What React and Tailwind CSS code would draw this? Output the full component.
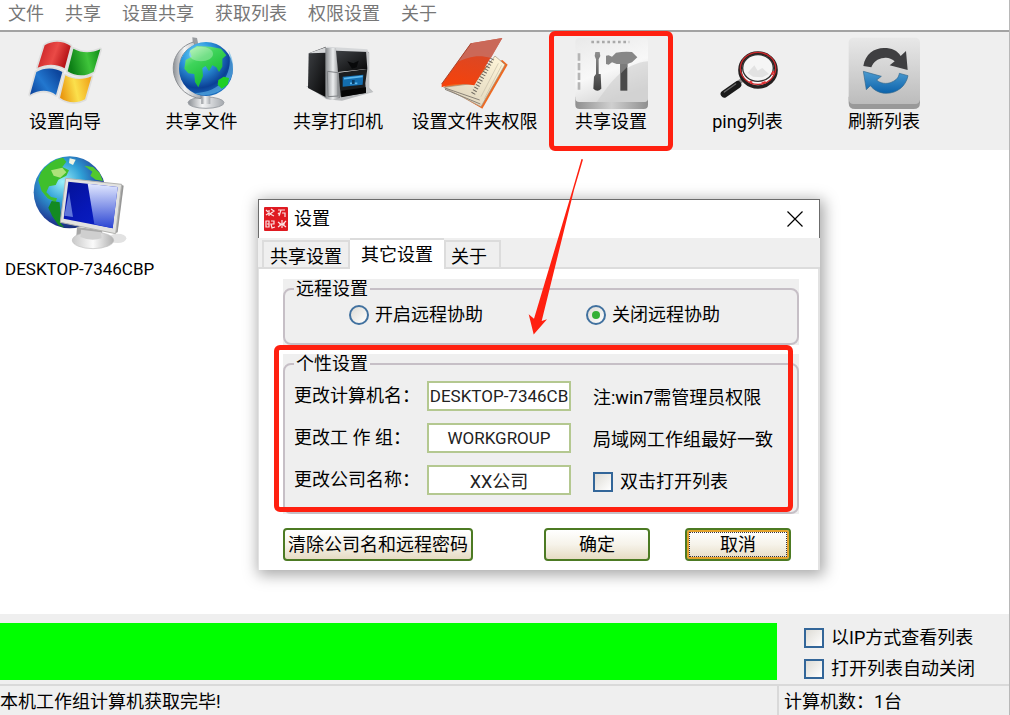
import { useState } from 'react'

const FlagIcon = () => (
  <svg viewBox="87 108 216 216" className="w-[72px] h-[72px] overflow-visible">
    <defs>
      <linearGradient id="flagRed" x1="0" x2="1" y1="0" y2="0.3">
        <stop offset="0" stopColor="#c31a1f" />
        <stop offset="0.6" stopColor="#ea4a46" />
        <stop offset="1" stopColor="#b51216" />
      </linearGradient>
      <linearGradient id="flagGreen" x1="0" x2="1" y1="0.2" y2="0">
        <stop offset="0" stopColor="#0d7f16" />
        <stop offset="0.55" stopColor="#3fc43a" />
        <stop offset="1" stopColor="#0e8a15" />
      </linearGradient>
      <linearGradient id="flagBlue" x1="0" x2="1" y1="1" y2="0.4">
        <stop offset="0" stopColor="#0b3f97" />
        <stop offset="0.5" stopColor="#2277cf" />
        <stop offset="1" stopColor="#0d469d" />
      </linearGradient>
      <linearGradient id="flagYellow" x1="0" x2="1" y1="0.6" y2="0.4">
        <stop offset="0" stopColor="#e9950e" />
        <stop offset="0.5" stopColor="#fbe04c" />
        <stop offset="1" stopColor="#f0a51a" />
      </linearGradient>
    </defs>
    <g stroke="#d4d4d4" strokeWidth="10" strokeLinejoin="round" opacity="0.6">
      <path d="M134 136C155 121 190 121 212 138L194 205C172 192 142 190 113 203ZM220 146C245 160 275 160 301 148L281 215C255 231 225 228 203 214ZM109 216C135 201 165 203 187 216L168 285C145 268 118 269 90 284ZM196 226C220 240 248 241 275 229L255 298C230 312 200 308 180 293Z" fill="#ddd" />
    </g>
    <path d="M134 136C155 121 190 121 212 138L194 205C172 192 142 190 113 203Z" fill="url(#flagRed)" />
    <path d="M220 146C245 160 275 160 301 148L281 215C255 231 225 228 203 214Z" fill="url(#flagGreen)" />
    <path d="M109 216C135 201 165 203 187 216L168 285C145 268 118 269 90 284Z" fill="url(#flagBlue)" />
    <path d="M196 226C220 240 248 241 275 229L255 298C230 312 200 308 180 293Z" fill="url(#flagYellow)" />
  </svg>
)

const GlobeIcon = () => (
  <svg viewBox="495 108 216 216" className="w-[72px] h-[72px] overflow-visible">
    <defs>
      <radialGradient id="sea" cx="0.35" cy="0.25" r="0.8">
        <stop offset="0" stopColor="#7fdcf5" />
        <stop offset="0.35" stopColor="#2f9be0" />
        <stop offset="0.75" stopColor="#0b4096" />
        <stop offset="1" stopColor="#1d74c4" />
      </radialGradient>
      <linearGradient id="land" x1="0" x2="0.6" y1="0" y2="1">
        <stop offset="0" stopColor="#b7f7b5" />
        <stop offset="0.4" stopColor="#3fd45b" />
        <stop offset="1" stopColor="#0fb52a" />
      </linearGradient>
      <linearGradient id="stand" x1="0" x2="1" y1="0" y2="0">
        <stop offset="0" stopColor="#8b8f94" />
        <stop offset="0.4" stopColor="#f4f5f6" />
        <stop offset="1" stopColor="#a5a9ae" />
      </linearGradient>
    </defs>
    <ellipse cx="615" cy="308" rx="54" ry="17" fill="url(#stand)" stroke="#9fa3a8" strokeWidth="3" />
    <rect x="601" y="284" width="27" height="28" fill="url(#stand)" />
    <path d="M574 112L588 114L592 134L576 138Z" fill="#9a9da1" />
    <path d="M578 126C530 140 508 185 520 228C532 270 565 292 600 296L600 284C560 270 536 240 536 200C536 170 552 148 582 136Z" fill="url(#stand)" stroke="#8d9094" strokeWidth="3" />
    <circle cx="615" cy="207" r="81" fill="url(#sea)" />
    <path d="M682 150C706 190 700 240 664 268C640 286 606 290 580 280C620 278 650 266 670 238C688 210 690 180 682 150Z" fill="#63b5e8" opacity="0.6" />
    <path d="M566 152L588 138L628 140L660 146L676 166L664 176L664 200L654 216L646 202L634 196L624 214L614 198L604 204L606 228L592 262L582 246L580 222L562 220L550 206L554 180L572 170Z" fill="url(#land)" />
    <path d="M652 240L668 230L684 234L680 254L662 266L650 254Z" fill="#1fcf25" />
    <ellipse cx="600" cy="162" rx="36" ry="22" fill="#fff" opacity="0.28" />
  </svg>
)

const PrinterIcon = () => (
  <svg viewBox="96 108 216 216" className="w-[72px] h-[72px] overflow-visible">
    <defs>
      <linearGradient id="metal" x1="0" x2="1" y1="0" y2="0">
        <stop offset="0" stopColor="#85888b" />
        <stop offset="0.5" stopColor="#eceeef" />
        <stop offset="1" stopColor="#77797c" />
      </linearGradient>
      <linearGradient id="coal" x1="0" x2="1" y1="0" y2="1">
        <stop offset="0" stopColor="#3e4145" />
        <stop offset="1" stopColor="#050505" />
      </linearGradient>
    </defs>
    <path d="M108 258L170 298L216 302L310 276L296 262Z" fill="#b9bbbd" />
    <path d="M116 160L168 140L168 292L114 264Z" fill="url(#coal)" />
    <path d="M116 160L172 140L292 148L296 158L200 154L170 158Z" fill="#d5d7d9" />
    <path d="M166 144L198 144L204 212L212 226L210 294L184 300L166 294Z" fill="url(#metal)" />
    <path d="M198 152L296 156L296 206L204 216Z" fill="url(#coal)" />
    <path d="M232 184L250 190L266 182L260 202L246 206Z" fill="#08090a" />
    <path d="M206 218L296 206L294 278L212 290Z" fill="#1b1d1f" />
    <path d="M288 152L298 158L298 268L306 276L288 280L286 250L292 206Z" fill="#c3c5c7" />
    <path d="M218 230L280 224L278 254L218 260Z" fill="#136eb0" />
    <path d="M222 236L278 229M240 250H262" stroke="#5db8ee" strokeWidth="5" />
    <path d="M250 240V252" stroke="#0b3f68" strokeWidth="8" />
    <path d="M172 214L204 218L204 288L174 290Z" fill="none" stroke="#7f8285" strokeWidth="3" />
    <path d="M214 272L288 262L288 278L214 292Z" fill="#050505" />
  </svg>
)

const BookIcon = () => (
  <svg viewBox="504 108 216 216" className="w-[72px] h-[72px] overflow-visible">
    <defs>
      <linearGradient id="cover" x1="0.6" x2="0.3" y1="0" y2="1">
        <stop offset="0" stopColor="#cf4a30" />
        <stop offset="1" stopColor="#f5420b" />
      </linearGradient>
      <linearGradient id="paper" x1="1" x2="0" y1="0" y2="1">
        <stop offset="0" stopColor="#fff6d9" />
        <stop offset="1" stopColor="#d9cfba" />
      </linearGradient>
    </defs>
    <path d="M512 254L634 326L710 194L694 180Z" fill="#ee6a22" />
    <path d="M518 262L630 320L702 194L672 168L610 250Z" fill="url(#paper)" stroke="#9b8e7c" strokeWidth="2" />
    <path d="M522 264L626 300M522 268L628 312" stroke="#8a8278" strokeWidth="3" />
    <path d="M664 176L606 282" stroke="#6b665e" strokeWidth="13" strokeDasharray="3 6" />
    <path d="M682 190L630 290M692 196L640 296" stroke="#c6bda6" strokeWidth="2" />
    <path d="M512 252L600 130L694 114L610 256C570 250 540 250 512 262Z" fill="url(#cover)" />
    <path d="M600 130L694 114L660 174C620 162 590 172 560 186Z" fill="#c96b5d" opacity="0.9" />
    <path d="M512 252L600 130" stroke="#a6452f" strokeWidth="3" />
  </svg>
)

const ToolsIcon = () => (
  <svg viewBox="105 108 216 216" className="w-[72px] h-[72px] overflow-visible">
    <defs>
      <linearGradient id="tile" x1="0" x2="0.4" y1="0" y2="1">
        <stop offset="0" stopColor="#e9e9e9" />
        <stop offset="0.6" stopColor="#f8f8f8" />
        <stop offset="1" stopColor="#dadada" />
      </linearGradient>
      <linearGradient id="tileEdge" x1="0" x2="1" y1="0" y2="0">
        <stop offset="0" stopColor="#8f8f8f" />
        <stop offset="0.5" stopColor="#cfcfcf" />
        <stop offset="1" stopColor="#8f8f8f" />
      </linearGradient>
      <linearGradient id="steel" x1="0" x2="0" y1="0" y2="1">
        <stop offset="0" stopColor="#8f8f8f" />
        <stop offset="1" stopColor="#3d3d3d" />
      </linearGradient>
    </defs>
    <path d="M106 290H324V314Q324 327 311 327H119Q106 327 106 314Z" fill="url(#tileEdge)" />
    <rect x="106" y="114" width="218" height="192" rx="12" fill="url(#tile)" />
    <path d="M324 184C250 190 210 250 170 306H312Q324 306 324 294Z" fill="#cccccc" opacity="0.55" />
    <path d="M154 126H268" stroke="#a9a9a9" strokeWidth="8" strokeDasharray="8 8" />
    <path d="M117 160V270" stroke="#b5b5b5" strokeWidth="8" strokeDasharray="22 7" />
    <path d="M166 156H179L181 168L176 178V222H182L184 266Q172 278 160 266L162 230L168 222V178L164 168Z" fill="url(#steel)" />
    <path d="M198 167L206 166L216 170L228 158Q252 154 276 156L292 172L276 187L262 192H230L216 187L206 194L198 192Z" fill="#878787" />
    <rect x="241" y="192" width="21" height="80" fill="#4a4a4a" />
    <path d="M241 192H262V200L241 222Z" fill="#7b7b7b" />
  </svg>
)

const MagnifierIcon = () => (
  <svg viewBox="513 108 216 216" className="w-[72px] h-[72px] overflow-visible">
    <path d="M606 238L580 258" stroke="#8b8b8b" strokeWidth="13" />
    <path d="M590 254L550 282" stroke="#1a1a1a" strokeWidth="22" strokeLinecap="round" />
    <path d="M584 252L550 276" stroke="#6a6a6a" strokeWidth="4" strokeLinecap="round" />
    <ellipse cx="651" cy="210" rx="54" ry="51" fill="#fafafa" stroke="#252020" strokeWidth="11" />
    <ellipse cx="651" cy="205" rx="53" ry="48" fill="none" stroke="#c8282b" strokeWidth="4" />
    <ellipse cx="651" cy="204" rx="46" ry="40" fill="#f5f5f5" stroke="#303030" strokeWidth="4" />
    <path d="M620 218L640 196L650 212L664 204L684 222L664 232L636 230Z" fill="#e2e2e2" />
    <path d="M626 244L634 248M662 250L674 246M692 224L698 214" stroke="#e33235" strokeWidth="6" />
  </svg>
)

const RefreshIcon = () => (
  <svg viewBox="144 108 216 216" className="w-[72px] h-[72px] overflow-visible">
    <defs>
      <linearGradient id="refreshTile" x1="0" x2="0" y1="0" y2="1">
        <stop offset="0" stopColor="#e8e8e8" />
        <stop offset="1" stopColor="#bcbcbc" />
      </linearGradient>
      <linearGradient id="refreshBlue" x1="0" x2="0" y1="0" y2="1">
        <stop offset="0" stopColor="#4c9bd0" />
        <stop offset="1" stopColor="#0b62ab" />
      </linearGradient>
    </defs>
    <path d="M146 290H360V308Q360 327 341 327H165Q146 327 146 308Z" fill="#999" />
    <rect x="146" y="113" width="214" height="199" rx="14" fill="url(#refreshTile)" />
    <path d="M190 198C196 162 222 144 252 144C276 144 292 152 302 168L318 153L323 210L269 196L284 184C274 176 264 172 252 174C232 176 220 186 214 202Z" fill="#3f3f41" />
    <path d="M190 214L244 229L230 240C240 250 260 254 276 246C290 240 296 232 298 220L324 227C318 258 292 280 258 280C236 279 222 270 211 257L199 269Z" fill="url(#refreshBlue)" stroke="#34688c" strokeWidth="2" />
  </svg>
)

const ComputerIcon = () => (
  <svg viewBox="96 30 282 282" className="w-[94px] h-[94px] overflow-visible">
    <defs>
      <radialGradient id="earth" cx="0.4" cy="0.35" r="0.7">
        <stop offset="0" stopColor="#9bf0fa" />
        <stop offset="0.4" stopColor="#2f9fd6" />
        <stop offset="0.8" stopColor="#213f98" />
        <stop offset="1" stopColor="#16276d" />
      </radialGradient>
      <linearGradient id="screen" x1="0" x2="1" y1="0" y2="1">
        <stop offset="0" stopColor="#041296" />
        <stop offset="0.5" stopColor="#0718b8" />
        <stop offset="1" stopColor="#0a22c8" />
      </linearGradient>
      <linearGradient id="glare" x1="0" x2="0" y1="0" y2="1">
        <stop offset="0" stopColor="#e3e9ff" />
        <stop offset="1" stopColor="#2b45d3" />
      </linearGradient>
      <linearGradient id="foot" x1="0" x2="1" y1="0" y2="0">
        <stop offset="0" stopColor="#c9c9c9" />
        <stop offset="0.5" stopColor="#fafafa" />
        <stop offset="1" stopColor="#b0b0b0" />
      </linearGradient>
    </defs>
    <ellipse cx="350" cy="280" rx="26" ry="14" fill="#e2e2e2" />
    <circle cx="206" cy="142" r="108" fill="url(#earth)" />
    <path d="M120 82C135 60 160 42 186 38L196 50L184 66L204 76L196 92L172 104L164 120L144 124L136 142L150 156L168 160L164 172L140 160L122 138L112 106Z" fill="#3fbf2c" />
    <path d="M150 76L184 68L196 82L178 98L158 92Z" fill="#c9eb8e" opacity="0.8" />
    <path d="M206 40L224 44L216 60L204 54Z" fill="#f1f4e2" />
    <path d="M250 62L276 66L296 84L306 108L284 104L268 92L274 80Z" fill="#52c92e" />
    <path d="M152 168L176 172L180 236L190 248L172 240L154 214L142 188Z" fill="#138a22" />
    <path d="M228 246L304 256L302 276L226 272Z" fill="#a7a7a7" />
    <ellipse cx="276" cy="286" rx="62" ry="25" fill="url(#foot)" stroke="#c0c0c0" strokeWidth="2" />
    <path d="M240 254L300 262L302 280Q270 290 238 276Z" fill="#cfcfcf" />
    <path d="M358 118L368 122L350 262L338 266Z" fill="#979797" />
    <path d="M194 100L362 118L344 266L178 232Z" fill="#e2e2e0" stroke="#b3b3b0" strokeWidth="3" />
    <path d="M202 110L350 126L335 250L188 221Z" fill="url(#screen)" />
    <path d="M260 116L350 126L335 250L280 238Z" fill="url(#glare)" />
    <path d="M204 140L216 216L190 212Z" fill="#7d96e8" opacity="0.75" />
  </svg>
)

const SealIcon = () => (
  <svg viewBox="0 0 24 24" className="w-6 h-6">
    <rect width="24" height="24" rx="1" fill="#df1a21" />
    <g fill="none" stroke="#fbe4e4" strokeWidth="1.2">
      <path d="M2 3L4 5M5 3V9M7 2L10 4L6 7L10 9M2 8L5 6" />
      <path d="M14 3H21M17 3L15 9M18 6H21V10M14 6L16 8" />
      <path d="M2 14H5V20H2ZM3 17H5M7 14H10V17H7L8 21L11 20" />
      <path d="M14 15L18 18L22 14M18 13V21M14 20L18 17L22 20M15 17H21" />
    </g>
  </svg>
)

const menus = ['文件', '共享', '设置共享', '获取列表', '权限设置', '关于']

const tools = [
  { label: '设置向导', Icon: FlagIcon },
  { label: '共享文件', Icon: GlobeIcon },
  { label: '共享打印机', Icon: PrinterIcon },
  { label: '设置文件夹权限', Icon: BookIcon },
  { label: '共享设置', Icon: ToolsIcon, marked: true },
  { label: 'ping列表', Icon: MagnifierIcon },
  { label: '刷新列表', Icon: RefreshIcon },
]

const CheckBox = ({ label }) => (
  <label className="flex items-center gap-[7px]">
    <input
      type="checkbox"
      className="appearance-none w-5 h-5 shrink-0 border-2 border-[#336699] bg-linear-to-br from-[#dedcd6] to-white checked:bg-[#336699]"
    />
    <span>{label}</span>
  </label>
)

const Radio = ({ label, value, current, onChange }) => (
  <label className="flex items-center gap-[6px]">
    <span className="grid place-items-center">
      <input
        type="radio"
        name="remote"
        checked={value === current}
        onChange={() => onChange(value)}
        className="peer col-start-1 row-start-1 appearance-none w-5 h-5 rounded-full border-2 border-[#41719f] bg-linear-to-br from-[#dedcd6] to-white"
      />
      <span className="hidden peer-checked:block col-start-1 row-start-1 w-2 h-2 rounded-full bg-[#35b035] pointer-events-none" />
    </span>
    <span>{label}</span>
  </label>
)

const Group = ({ title, children, className }) => (
  <div className={`relative bg-[#efefef] ${className}`}>
    <fieldset className="h-full min-w-0 border-2 border-[#c6bfc6] rounded-lg">
      <legend className="ml-[9px] px-[2px] leading-5">{title}</legend>
      {children}
    </fieldset>
  </div>
)

const Field = ({ id, label, value, className = '', children }) => (
  <>
    <label htmlFor={id} className="whitespace-pre">
      {label}
    </label>
    <input
      id={id}
      defaultValue={value}
      className={`w-full h-[30px] border-2 border-[#b4c890] bg-white text-center text-[#222] outline-none ${className}`}
    />
    <div className="pl-[22px] pt-1 whitespace-nowrap">{children}</div>
  </>
)

const PushButton = ({ children, className }) => (
  <button
    className={`h-[33px] rounded border-2 border-[#4c7a23] bg-linear-to-b from-white via-[#f6f3ea] to-[#e6dcc4] whitespace-nowrap ${className}`}
  >
    {children}
  </button>
)

const SettingsDialog = () => {
  const [remote, setRemote] = useState('off')

  return (
    <div
      role="dialog"
      aria-label="设置"
      className="absolute left-[258px] top-[49px] w-[562px] bg-white shadow-[2px_3px_14px_2px_rgba(0,0,0,0.35)]"
    >
      <div className="flex items-center h-[39px] pl-[5px] pr-4 border border-b-0 border-[#6c6c6c]">
        <SealIcon />
        <h2 className="ml-[6px]">设置</h2>
        <button aria-label="关闭" className="ml-auto">
          <svg viewBox="0 0 16 16" className="w-4 h-4">
            <path d="M0.5 0.5L15.5 15.5M15.5 0.5L0.5 15.5" stroke="#000" strokeWidth="1.2" />
          </svg>
        </button>
      </div>

      {/* Tabs */}
      <div role="tablist" className="flex items-end h-[31px] pl-1 bg-[#efefef] border-b-2 border-[#dcdcdc]">
        <button role="tab" aria-selected="false" className="h-[27px] px-[6px] pt-[3px] border-2 border-b-0 border-[#dcdcdc]">
          共享设置
        </button>
        <button role="tab" aria-selected="true" className="h-[31px] -mb-[2px] px-[11px] bg-white border-t-2 border-[#dcdcdc]">
          其它设置
        </button>
        <button role="tab" aria-selected="false" className="h-[27px] pl-[5px] pr-3 pt-[3px] border-2 border-b-0 border-[#dcdcdc]">
          关于
        </button>
      </div>

      <div className="pl-6 pr-[19px] pt-[10px] pb-[9px] border-l border-r-2 border-[#e2e2e2]">
        <Group title="远程设置" className="h-[66px]">
          <div className="flex items-center gap-[103px] pl-16 pt-1">
            <Radio label="开启远程协助" value="on" current={remote} onChange={setRemote} />
            <Radio label="关闭远程协助" value="off" current={remote} onChange={setRemote} />
          </div>
        </Group>

        <div className="relative mt-[9px]">
          <Group title="个性设置" className="h-[160px]">
            <div className="grid grid-cols-[133px_144px_1fr] items-center gap-y-3 pl-[9px] pt-[7px]">
              <Field id="host" label="更改计算机名：" value="DESKTOP-7346CB" className="text-[17px]">
                注:win7需管理员权限
              </Field>
              <Field id="workgroup" label="更改工 作 组：" value="WORKGROUP" className="text-[17px]">
                局域网工作组最好一致
              </Field>
              <Field id="company" label="更改公司名称：" value="XX公司">
                <CheckBox label="双击打开列表" />
              </Field>
            </div>
          </Group>
          <div className="absolute -left-[9px] right-[6px] -top-[9px] bottom-[2px] border-5 border-[#ff2010] rounded-md pointer-events-none" />
        </div>

        <div className="flex mt-[14px] pr-2">
          <PushButton className="px-[3px]">清除公司名和远程密码</PushButton>
          <div className="flex gap-[35px] ml-auto">
            <PushButton className="w-[106px]">确定</PushButton>
            <PushButton className="w-[106px] shadow-[inset_0_0_0_2px_#e3a32c] outline-1 outline-dotted outline-[#334] -outline-offset-5">
              取消
            </PushButton>
          </div>
        </div>
      </div>
    </div>
  )
}

const App = () => {
  return (
    <div className="min-h-screen flex flex-col bg-white border-r border-[#b8b8b8] text-black text-[18px] leading-6 font-[Roboto,'Noto_Sans_CJK_SC',sans-serif]">
      <nav className="flex items-center gap-[21px] h-7 pl-2 text-[#777]">
        {menus.map((m) => (
          <button key={m}>{m}</button>
        ))}
      </nav>

      {/* Toolbar */}
      <div className="mt-[2px] h-[120px] border-t-2 border-[#a3a3a3] bg-[#efefef] flex justify-between pr-[60px]">
        {tools.map(({ label, Icon, marked }) => (
          <button key={label} className="relative flex flex-col items-center w-[130px] pt-1 whitespace-nowrap">
            <Icon />
            <span className="mt-[2px]">{label}</span>
            {marked && (
              <span className="absolute inset-x-[3px] -inset-y-px border-5 border-[#ff2010] rounded-md" />
            )}
          </button>
        ))}
      </div>

      <main className="relative flex-1 min-h-[464px]">
        <div className="inline-flex flex-col items-center pl-[5px] pt-[5px]">
          <ComputerIcon />
          <span className="mt-2 text-[17px]">DESKTOP-7346CBP</span>
        </div>
        <SettingsDialog />
        <svg viewBox="526 158 60 180" className="absolute left-[526px] top-2 w-[60px] h-[180px] pointer-events-none">
          <path d="M581.500 159L583 159.500L574 190L541.700 321L547 319.300L533.700 334.500L528.700 314.300L534 318.700L572.500 190Z" fill="#ff2010" />
        </svg>
      </main>

      <div className="flex bg-[#efefef] pt-[9px] pb-[3px]">
        <div
          role="progressbar"
          aria-label="获取进度"
          aria-valuenow={100}
          className="flex-1 h-[57px] bg-[#00ff00]"
        />
        <div className="flex flex-col gap-[7px] w-[232px] pl-[27px] pt-[3px]">
          <CheckBox label="以IP方式查看列表" />
          <CheckBox label="打开列表自动关闭" />
        </div>
      </div>

      {/* Status bar */}
      <footer className="flex h-8 border-t-2 border-[#d9d9d9] bg-[#efefef] items-stretch">
        <div className="flex-1 pt-1">本机工作组计算机获取完毕!</div>
        <div className="w-[232px] pl-[5px] pt-1 border-l-2 border-[#d9d9d9]">计算机数：1台</div>
      </footer>
    </div>
  )
}

export default App
